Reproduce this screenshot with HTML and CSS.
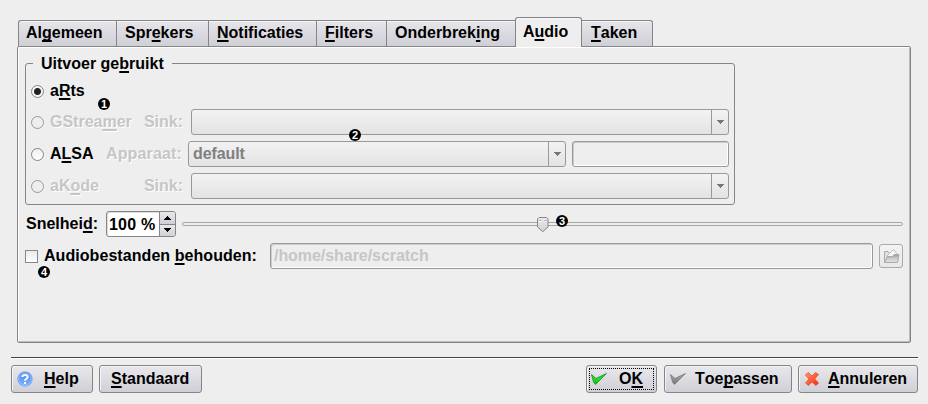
FILE: index.html
```
<!DOCTYPE html>
<html lang="nl">
<head>
<meta charset="utf-8">
<title>Audio</title>
<link rel="stylesheet" href="styles.css">
</head>
<body>
<nav class="tabs">
  <div class="tab t1">Al<u>g</u>emeen</div>
  <div class="tab t2">Spr<u>e</u>kers</div>
  <div class="tab t3"><u>N</u>otificaties</div>
  <div class="tab t4"><u>F</u>ilters</div>
  <div class="tab t5">Onderbrek<u>i</u>ng</div>
  <div class="tab active">A<u>u</u>dio</div>
  <div class="tab t7"><u>T</u>aken</div>
</nav>
<main class="panel">
  <fieldset class="group">
    <legend>Uitvoer ge<u>b</u>ruikt</legend>
    <div class="row first"><span class="radio on"></span><span class="name">a<u>R</u>ts</span></div>
    <div class="row"><span class="radio off"></span><span class="name dim">GStrea<u>m</u>er</span><span class="sub dim">Sink:</span>
      <div class="combo"><span class="value"></span><span class="drop"><svg width="7" height="4"><path d="M0 0H7V1H6V2H5V3H4V4H3V3H2V2H1V1H0Z"/></svg></span></div></div>
    <div class="row alsa"><span class="radio"></span><span class="name">A<u>L</u>SA</span><span class="sub dim">Apparaat:</span>
      <div class="combo"><span class="value">default</span><span class="drop"><svg width="7" height="4"><path d="M0 0H7V1H6V2H5V3H4V4H3V3H2V2H1V1H0Z"/></svg></span></div>
      <div class="edit device"></div></div>
    <div class="row"><span class="radio off"></span><span class="name dim">aK<u>o</u>de</span><span class="sub dim">Sink:</span>
      <div class="combo"><span class="value"></span><span class="drop"><svg width="7" height="4"><path d="M0 0H7V1H6V2H5V3H4V4H3V3H2V2H1V1H0Z"/></svg></span></div></div>
  </fieldset>
  <div class="speed">
    <span class="speed-label">Snelhei<u>d</u>:</span>
    <div class="spin"><span class="num">100 %</span><span class="steps"><span><svg width="7" height="4"><path d="M3 0H4V1H5V2H6V3H7V4H0V3H1V2H2V1H3Z"/></svg></span><span><svg width="7" height="4"><path d="M0 0H7V1H6V2H5V3H4V4H3V3H2V2H1V1H0Z"/></svg></span></span></div>
    <div class="slider"><svg class="thumb" width="12" height="16" viewBox="0 0 12 16"><defs><linearGradient id="tg" x2="0" y2="1"><stop stop-color="#ececef"/><stop offset="1" stop-color="#cfcfd6"/></linearGradient></defs><path d="M2 .5H9.5L11 2V10L6 14.5H5.5L.5 10V2Z" fill="url(#tg)" stroke="#858588"/><path d="M2 4.5H4M7.5 4.5H9.5" stroke="#fff"/><path d="M2 3.5H4M7.5 3.5H9.5" stroke="#aaa"/></svg></div>
  </div>
  <div class="keep">
    <span class="check"></span><span class="keep-label">Audiobestanden <u>b</u>ehouden:</span>
    <div class="edit path">/home/share/scratch</div>
    <div class="browse"><svg width="17" height="16" viewBox="0 0 17 16"><defs><linearGradient id="fg" x2="0" y2="1"><stop stop-color="#999"/><stop offset=".5" stop-color="#ccc"/><stop offset="1" stop-color="#e4e4e4"/></linearGradient></defs><path d="M1.500 14.500V3.500H5L6 5" fill="#e0e0e0" stroke="#aaa"/><path d="M4 8L10.500 1.500L14.500 6.500V9H4Z" fill="#f7f7f7" stroke="#bbb"/><path d="M1.500 14.500L4.500 8.500H9.500L11 6.500H16L14.500 14.500Z" fill="url(#fg)" stroke="#aaa"/></svg></div>
  </div>
  <span class="badge b1">1</span><span class="badge b2">2</span><span class="badge b3">3</span><span class="badge b4">4</span>
</main>
<hr>
<footer>
  <div class="button help"><svg width="16" height="16" viewBox="0 0 16 16"><defs><linearGradient id="hg" x2="0" y2="1"><stop stop-color="#4a80f0"/><stop offset="1" stop-color="#7ab8ff"/></linearGradient></defs><circle cx="8" cy="8" r="7.300" fill="url(#hg)" stroke="#6f9cf0" stroke-width=".6"/><circle cx="8" cy="8" r="6.200" fill="none" stroke="#a9c9ff" stroke-width=".7"/><path d="M5.300 6C5.300 3.200 10.700 3.200 10.700 6C10.700 7.800 8 7.700 8 9.700M8 11V13" fill="none" stroke="#fff" stroke-width="2"/></svg><span><u>H</u>elp</span></div>
  <div class="button standard"><span><u>S</u>tandaard</span></div>
  <div class="button ok"><svg width="18" height="16" viewBox="0 0 18 16"><defs><linearGradient id="og" x2="0" y2="1"><stop stop-color="#35cf3a"/><stop offset=".5" stop-color="#20e020"/><stop offset="1" stop-color="#08b010"/></linearGradient></defs><path d="M1.500 3.500L6 7.500L16.500 2.500L5.500 13.500L3.500 11Z" fill="url(#og)" stroke="#159024" stroke-width=".8"/></svg><span>O<u>K</u></span></div>
  <div class="button apply"><svg width="18" height="16" viewBox="0 0 18 16"><defs><linearGradient id="ag" x2="0" y2="1"><stop stop-color="#aaa"/><stop offset="1" stop-color="#777"/></linearGradient></defs><path d="M1.500 3.500L6 7.500L16.500 2.500L5.500 13.500L3.500 11Z" fill="url(#ag)" stroke="#777" stroke-width=".8"/></svg><span>Toe<u>p</u>assen</span></div>
  <div class="button cancel"><svg width="16" height="16" viewBox="0 0 16 16"><defs><linearGradient id="cg" x2="1" y2="1"><stop stop-color="#ff9a67"/><stop offset="1" stop-color="#ff2411"/></linearGradient></defs><path d="M4 1.500L8 5L11.500 1.500L14.500 3.500L10.700 8L14.500 12L12 14.500L8 11L4.500 14.500L1.500 12L5 8L1.500 4Z" fill="url(#cg)" stroke="#e0502e" stroke-width=".8"/></svg><span><u>A</u>nnuleren</span></div>
</footer>
</body>
</html>
```
FILE: styles.css
```
* { box-sizing: border-box; }
body {
  margin: 0;
  width: 928px;
  height: 404px;
  padding: 17px 10px 0 11px;
  overflow: hidden;
  background: #eee;
  color: #000;
  font: bold 16px/18px "Liberation Sans", sans-serif;
  font-kerning: none;
  white-space: nowrap;
}
u { text-decoration-thickness: 2px; text-underline-offset: 2px; text-decoration-skip-ink: none; }
svg { display: block; flex: none; }

.tabs { display: flex; align-items: flex-end; height: 29px; padding-left: 7px; position: relative; z-index: 1; }
.tab {
  height: 26px;
  border: solid #858588;
  border-width: 1px 0 0 1px;
  padding: 3px 0 0 7px;
  background: linear-gradient(#e5e5ea, #cfcfd6);
  box-shadow: inset 0 1px #f5f5f7;
}
.t1 { width: 98px; border-top-left-radius: 3px; }
.t2 { width: 92px; padding-left: 8px; }
.t3 { width: 108px; padding-left: 8px; }
.t4 { width: 70px; padding-left: 8px; }
.t5 { width: 129px; padding-left: 8px; }
.active {
  width: 67px;
  height: 30px;
  margin-bottom: -1px;
  padding-top: 5px;
  border-right-width: 1px;
  border-radius: 3px 3px 0 0;
  background: #eee;
}
.t7 { width: 71px; padding-left: 9px; border-left: 0; border-right-width: 1px; border-top-right-radius: 3px; }

.panel {
  position: relative;
  width: 894px;
  height: 297px;
  margin: 0 0 0 6px;
  padding: 7px 7px 0;
  border: 1px solid #858588;
  border-radius: 2px;
  box-shadow: inset 1px 1px #fff, inset -1px -1px #bbb;
}
.group {
  width: 710px;
  height: 151px;
  margin: 0;
  padding: 0 5px;
  border: 1px solid #858588;
  border-radius: 3px;
}
legend { margin-left: 2px; padding: 1px 8px 0; height: 18px; }
.row { display: flex; align-items: center; height: 26px; margin-bottom: 6px; }
.row.first { height: 18px; margin-top: 10px; margin-bottom: 9px; }
.radio {
  width: 13px;
  height: 13px;
  border: 1px solid #858588;
  border-radius: 50%;
  background: linear-gradient(#eee, #fff);
}
.radio.off { background: #eee; border-color: #999; }
.radio.on { background: radial-gradient(circle, #222 0 3px, #f5f5f5 4px); }
.name { width: 89px; margin-left: 6px; }
.sub { width: 44px; text-align: right; }
.dim { color: #c6c6c6; text-shadow: 1px 1px #fff; }
.combo {
  display: flex;
  width: 538px;
  height: 26px;
  margin-left: 8px;
  border: 1px solid #999;
  border-radius: 3px;
  background: linear-gradient(#f2f2f2, #e3e3e3);
  color: #808080;
}
.value { flex: 1; padding: 3px 0 0 4px; }
.drop { width: 17px; border-left: 1px solid #999; display: flex; align-items: center; justify-content: center; }
.drop svg { fill: #777; }
.alsa .name { width: 52px; }
.alsa .sub { width: 80px; letter-spacing: .15px; }
.alsa .combo { width: 378px; margin-left: 6px; }
.alsa .combo { letter-spacing: -.1px; }
.edit {
  height: 26px;
  border: 1px solid #999;
  border-radius: 3px;
  box-shadow: inset 1px 1px #ccc, inset -1px -1px #fff;
}
.device { width: 157px; margin-left: 6px; }

.speed { display: flex; align-items: center; height: 26px; margin-top: 6px; }
.speed-label { width: 81px; padding-left: 1px; }
.spin { display: flex; width: 70px; height: 26px; border: 1px solid #858588; border-radius: 3px; background: #fff; box-shadow: inset 1px 1px #ddd; overflow: hidden; }
.num { flex: 1; padding: 4px 0 0 2px; letter-spacing: .2px; }
.steps { width: 16px; display: flex; flex-direction: column; border-left: 1px solid #858588; }
.steps span { flex: 1; display: flex; align-items: center; justify-content: center; background: linear-gradient(#e8e8ec, #cfcfd6); }
.steps span + span { border-top: 1px solid #858588; }
.slider { position: relative; width: 721px; height: 4px; margin-left: 6px; border: 1px solid #a5a5a5; border-radius: 2px; }
.thumb { position: absolute; left: 354px; top: -6px; }

.keep { display: flex; align-items: center; height: 26px; margin-top: 6px; }
.check { width: 13px; height: 13px; border: 1px solid #888; background: linear-gradient(#eaeaea, #fff); }
.keep-label { width: 226px; margin-left: 6px; letter-spacing: .06px; }
.path { width: 603px; padding: 3px 0 0 3px; color: #c6c6c6; letter-spacing: -.05px; }
.browse { width: 24px; height: 24px; margin-left: 6px; display: flex; align-items: center; justify-content: center; border: 1px solid #aaa; border-radius: 3px; background: linear-gradient(#f3f3f3, #e8e8e8); }
.badge {
  position: absolute;
  width: 12px;
  height: 12px;
  border-radius: 50%;
  background: #000;
  color: #fff;
  font-size: 11px;
  line-height: 12px;
  text-align: center;
}
.b1 { left: 80px; top: 51px; }
.b2 { left: 331px; top: 82px; }
.b3 { left: 538px; top: 168px; }
.b4 { left: 20px; top: 219px; }

hr { width: 907px; height: 2px; margin: 14px 0 6px; border: 0; border-top: 1px solid #444; border-bottom: 1px solid #fff; }
footer { display: flex; width: 907px; }
.button {
  display: flex;
  align-items: center;
  height: 28px;
  border: 1px solid #858588;
  border-radius: 3px;
  background: linear-gradient(#e8e8ec, #cfcfd6);
  box-shadow: inset 1px 1px #f3f3f5;
}
.help { width: 82px; padding-left: 5px; gap: 11px; }
.standard { width: 103px; margin-left: 6px; padding-left: 11px; }
.ok { position: relative; width: 71px; margin-left: auto; padding-left: 3px; gap: 11px; }
.ok::after { content: ""; position: absolute; inset: 2px; border: 1px dotted #000; }
.apply { width: 128px; margin-left: 7px; padding-left: 4px; gap: 8px; }
.cancel { width: 120px; margin-left: 6px; padding-left: 5px; gap: 8px; }
```
